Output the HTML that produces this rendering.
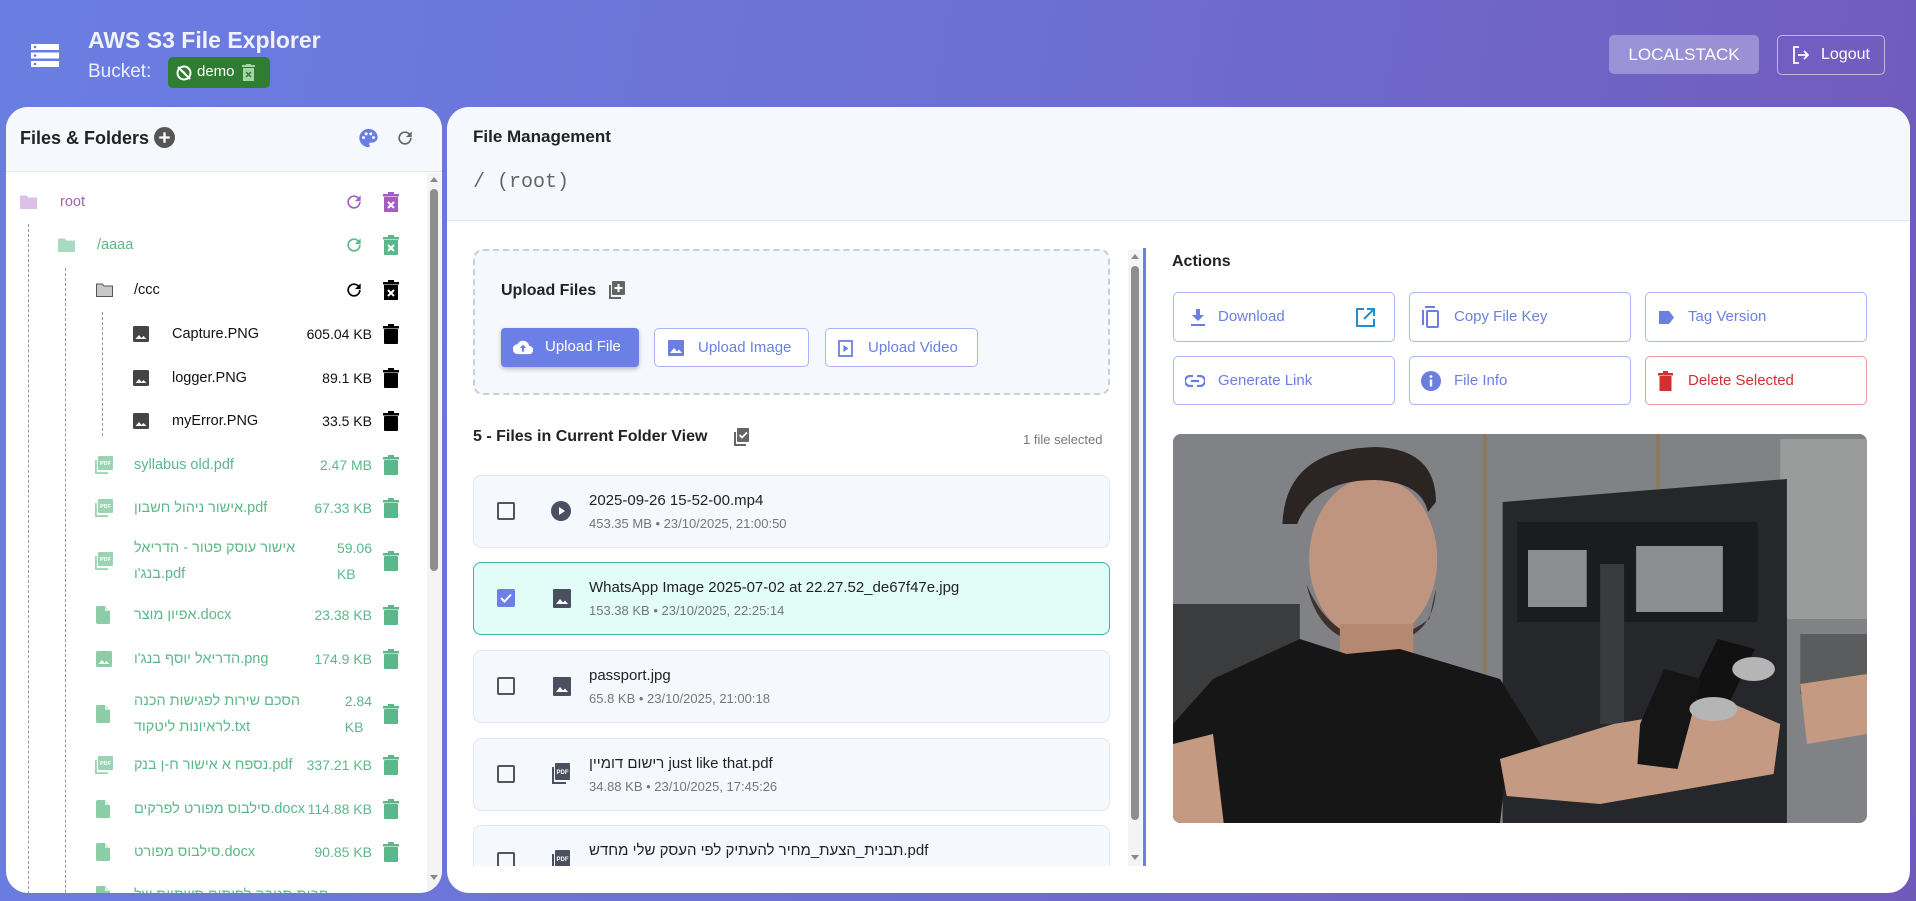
<!DOCTYPE html>
<html><head><meta charset="utf-8">
<style>
*{box-sizing:border-box;margin:0;padding:0}
html,body{width:1916px;height:901px;overflow:hidden}
body{font-family:"Liberation Sans","Noto Sans CJK SC",sans-serif;background:linear-gradient(100deg,#6a7ee2 0%,#6d6fd2 50%,#7159ba 100%);position:relative;color:#222}
.a{position:absolute}
svg{display:block}
.panel{position:absolute;background:#fff;border-radius:22px;overflow:hidden}
.hdr{background:#f5f8fc;border-bottom:1px solid #e2e7ee;position:absolute;left:0;right:0;top:0}
.t{position:absolute;white-space:nowrap;font-size:15px;line-height:18px}
.dash{position:absolute;border-left:1px dashed #999;width:0}
.btn{position:absolute;border:1px solid #a9b5f2;border-radius:5px;background:#fff;color:#6b7fe0;font-size:15px;display:flex;align-items:center}
.card{position:absolute;left:473px;width:637px;height:73px;background:#f5f8fc;border:1px solid #e2e7ef;border-radius:8px}
.cb{position:absolute;left:23px;top:26px;width:18px;height:18px;border:2px solid #555;border-radius:2px}
.cn{position:absolute;left:115px;top:16px;font-size:15px;color:#222;white-space:nowrap}
.cm{position:absolute;left:115px;top:40px;font-size:13px;color:#777;white-space:nowrap}
.ci{position:absolute;left:78px;top:26px}
</style></head><body>

<div class="a" style="left:31px;top:44px">
<svg width="28" height="23" viewBox="0 0 28 23"><g fill="#fff"><rect x="0" y="0" width="28" height="6"/><rect x="0" y="8.5" width="28" height="6"/><rect x="0" y="17" width="28" height="6"/></g><g fill="#6a7ee2"><circle cx="4" cy="3" r="1.3"/><circle cx="4" cy="11.5" r="1.3"/><circle cx="4" cy="20" r="1.3"/></g></svg></div>
<div class="t" style="left:88px;top:26px;font-size:23px;line-height:28px;font-weight:bold;color:#f1f1f8">AWS S3 File Explorer</div>
<div class="t" style="left:88px;top:61px;font-size:19px;line-height:22px;color:#eeeef8">Bucket:</div>
<div class="a" style="left:168px;top:57px;width:102px;height:31px;background:#2e7d32;border-radius:5px">
<svg class="a" style="left:8px;top:8px" width="16" height="16" viewBox="0 0 16 16"><circle cx="8" cy="8" r="6.5" fill="none" stroke="#fff" stroke-width="2"/><path d="M2 2L14 14" stroke="#fff" stroke-width="2"/><path d="M5 6q3 0 4 3" stroke="#fff" stroke-width="1.5" fill="none"/></svg>
<div class="t" style="left:29px;top:6px;color:#fff;font-size:15px">demo</div>
<svg class="a" style="left:74px;top:7px" width="13" height="17" viewBox="0 0 13 17"><rect x="0" y="1" width="13" height="2" fill="#a5d6a7"/><rect x="4" y="0" width="5" height="2" fill="#a5d6a7"/><rect x="1" y="4" width="11" height="13" fill="#a5d6a7"/><path d="M4 8l5 5M9 8l-5 5" stroke="#2e7d32" stroke-width="1.5"/></svg>
</div>
<div class="a" style="left:1609px;top:35px;width:150px;height:39px;background:rgba(255,255,255,.3);border-radius:5px;color:#fff;font-size:17px;display:flex;align-items:center;justify-content:center">LOCALSTACK</div>
<div class="a" style="left:1777px;top:35px;width:108px;height:40px;border:1px solid rgba(255,255,255,.55);border-radius:5px;color:#fff;font-size:16px">
<svg class="a" style="left:14px;top:10px" width="18" height="18" viewBox="0 0 18 18" fill="none" stroke="#fff" stroke-width="1.8"><path d="M7 1H2v16h5"/><path d="M6 9h10M12 5l4 4-4 4"/></svg>
<div class="t" style="left:43px;top:10px;font-size:16px">Logout</div></div>

<div class="panel" style="left:6px;top:107px;width:436px;height:786px">
<div class="hdr" style="height:65px"></div>
<div class="t" style="left:14px;top:20px;font-size:18px;line-height:22px;font-weight:bold;color:#222">Files &amp; Folders</div>
<svg class="a" style="left:148px;top:20px" width="21" height="21" viewBox="0 0 20 20"><circle cx="10" cy="10" r="10" fill="#555"/><path d="M10 5v10M5 10h10" stroke="#fff" stroke-width="2.2"/></svg>
<svg class="a" style="left:351px;top:20px" width="23" height="22" viewBox="0 0 24 24"><path fill="#6a7ee2" d="M12 2C6.5 2 2 6.5 2 12s4.5 10 10 10c.9 0 1.5-.7 1.5-1.5 0-.4-.1-.7-.4-1-.2-.3-.4-.6-.4-1 0-.8.7-1.5 1.5-1.5H16c3.3 0 6-2.7 6-6C22 6 17.5 2 12 2z"/><g fill="#fff"><circle cx="6.5" cy="11.5" r="1.6"/><circle cx="9.5" cy="7.5" r="1.6"/><circle cx="14.5" cy="7.5" r="1.6"/><circle cx="17.5" cy="11.5" r="1.6"/></g></svg>
<svg class="a" style="left:389px;top:21px" width="20" height="20" viewBox="0 0 24 24"><path fill="#666" d="M17.65 6.35A7.96 7.96 0 0012 4a8 8 0 108 8h-2a6 6 0 11-1.76-4.24L13 11h7V4l-2.35 2.35z"/></svg>
<div class="a" style="left:421px;top:66px;width:14px;height:720px;background:#f4f4f4"></div>
<div class="a" style="left:424px;top:70px;width:0;height:0;border-left:4px solid transparent;border-right:4px solid transparent;border-bottom:5px solid #888"></div>
<div class="a" style="left:424px;top:82px;width:8px;height:382px;background:#8e8e8e;border-radius:4px"></div>
<div class="a" style="left:424px;top:768px;width:0;height:0;border-left:4px solid transparent;border-right:4px solid transparent;border-top:5px solid #888"></div>
</div>

<div id="tree"></div>

<div class="panel" style="left:447px;top:107px;width:1463px;height:786px">
<div class="hdr" style="height:114px"></div>
<div class="t" style="left:26px;top:20px;font-size:17px;line-height:20px;font-weight:bold;color:#222">File Management</div>
<div class="t" style="left:26px;top:64px;font-family:'Liberation Mono',monospace;font-size:20px;line-height:24px;color:#666">/ (root)</div>
</div>

<div class="a" style="left:473px;top:249px;width:637px;height:146px;border:2px dashed #c8d0dc;border-radius:10px;background:#f5f8fc"></div>
<div class="t" style="left:501px;top:282px;font-size:16px;font-weight:bold;color:#222">Upload Files</div>
<svg class="a" style="left:609px;top:281px" width="16" height="18" viewBox="0 0 16 18"><rect x="0" y="4" width="2" height="14" fill="#666"/><rect x="0" y="16" width="12" height="2" fill="#666"/><rect x="3" y="0" width="13" height="14" rx="1" fill="#666"/><path d="M9.5 3v8M5.5 7h8" stroke="#fff" stroke-width="2"/></svg>
<div class="a" style="left:501px;top:328px;width:138px;height:39px;background:#6b7fe6;border-radius:4px;box-shadow:0 2px 4px rgba(0,0,0,.25);color:#fff;font-size:15px">
<svg class="a" style="left:12px;top:12px" width="20" height="15" viewBox="0 0 24 16"><path fill="#fff" d="M19.4 6A7.5 7.5 0 005.4 4 6 6 0 006 16h13a5 5 0 00.4-10z"/><path d="M12 4.5l-4 4h2.6V13h2.8V8.5H16z" fill="#6b7fe6"/></svg>
<div class="t" style="left:44px;top:10px">Upload File</div></div>
<div class="btn" style="left:654px;top:328px;width:155px;height:39px">
<svg class="a" style="left:13px;top:11px" width="16" height="16" viewBox="0 0 16 16"><rect width="16" height="16" rx="1" fill="#6b7fe0"/><path d="M2 13l4-5 3 3.5 2-2 3 3.5z" fill="#fff"/></svg>
<div class="t" style="left:43px;top:10px">Upload Image</div></div>
<div class="btn" style="left:825px;top:328px;width:153px;height:39px">
<svg class="a" style="left:12px;top:11px" width="15" height="17" viewBox="0 0 15 17"><rect x="1" y="1" width="13" height="15" fill="none" stroke="#6b7fe0" stroke-width="1.8"/><path d="M5.5 5v7l5-3.5z" fill="#6b7fe0"/></svg>
<div class="t" style="left:42px;top:10px">Upload Video</div></div>

<div class="t" style="left:473px;top:428px;font-size:16px;font-weight:bold;color:#222">5 - Files in Current Folder View</div>
<svg class="a" style="left:734px;top:428px" width="15" height="18" viewBox="0 0 15 18"><rect x="0" y="4" width="2" height="14" fill="#666"/><rect x="0" y="16" width="12" height="2" fill="#666"/><rect x="3" y="0" width="12" height="14" rx="1" fill="#666"/><path d="M5.5 7l2.5 2.5 5-5" stroke="#fff" stroke-width="1.8" fill="none"/></svg>
<div class="t" style="left:1023px;top:431px;font-size:13px;color:#777">1 file selected</div>

<div class="a" style="left:470px;top:470px;width:650px;height:396px;overflow:hidden">
<div style="position:absolute;left:-470px;top:-470px;width:1200px;height:900px">
<div class="card" style="top:475px"><div class="cb"></div>
<svg class="ci" width="20" height="20" viewBox="0 0 20 20" style="left:77px;top:25px"><circle cx="10" cy="10" r="10" fill="#4a5060"/><path d="M8 6v8l6-4z" fill="#fff"/></svg>
<div class="cn">2025-09-26 15-52-00.mp4</div><div class="cm">453.35 MB • 23/10/2025, 21:00:50</div></div>
<div class="card" style="top:562px;background:#e2fdf8;border-color:#3bb5a6"><div class="cb" style="background:#6b7fe6;border-color:#6b7fe6"><svg width="14" height="14" viewBox="0 0 14 14"><path d="M2 7l3.5 3.5L12 3.5" stroke="#fff" stroke-width="2" fill="none"/></svg></div>
<svg class="ci" width="18" height="19" viewBox="0 0 18 19" style="left:79px"><rect width="18" height="19" rx="1" fill="#4a5060"/><path d="M3 15l4-5 3 3.5 2-2 3 3.5z" fill="#fff"/></svg>
<div class="cn">WhatsApp Image 2025-07-02 at 22.27.52_de67f47e.jpg</div><div class="cm">153.38 KB • 23/10/2025, 22:25:14</div></div>
<div class="card" style="top:650px"><div class="cb"></div>
<svg class="ci" width="18" height="19" viewBox="0 0 18 19" style="left:79px"><rect width="18" height="19" rx="1" fill="#4a5060"/><path d="M3 15l4-5 3 3.5 2-2 3 3.5z" fill="#fff"/></svg>
<div class="cn">passport.jpg</div><div class="cm">65.8 KB • 23/10/2025, 21:00:18</div></div>
<div class="card" style="top:738px"><div class="cb"></div>
<svg class="ci" width="18" height="21" viewBox="0 0 18 21" style="left:78px;top:24px"><rect x="0" y="4" width="2" height="17" fill="#4a5060"/><rect x="0" y="19" width="14" height="2" fill="#4a5060"/><rect x="3" y="0" width="15" height="17" rx="1" fill="#4a5060"/><text x="10.5" y="11" font-size="6" font-weight="bold" fill="#fff" text-anchor="middle" font-family="Liberation Sans">PDF</text></svg>
<div class="cn">רישום דומיין just like that.pdf</div><div class="cm">34.88 KB • 23/10/2025, 17:45:26</div></div>
<div class="card" style="top:825px"><div class="cb"></div>
<svg class="ci" width="18" height="21" viewBox="0 0 18 21" style="left:78px;top:24px"><rect x="0" y="4" width="2" height="17" fill="#4a5060"/><rect x="0" y="19" width="14" height="2" fill="#4a5060"/><rect x="3" y="0" width="15" height="17" rx="1" fill="#4a5060"/><text x="10.5" y="11" font-size="6" font-weight="bold" fill="#fff" text-anchor="middle" font-family="Liberation Sans">PDF</text></svg>
<div class="cn">תבנית_הצעת_מחיר להעתיק לפי העסק שלי מחדש.pdf</div></div>
</div></div>

<div class="a" style="left:1128px;top:250px;width:14px;height:616px;background:#f4f4f4"></div>
<div class="a" style="left:1131px;top:254px;width:0;height:0;border-left:4px solid transparent;border-right:4px solid transparent;border-bottom:5px solid #888"></div>
<div class="a" style="left:1131px;top:266px;width:8px;height:554px;background:#8e8e8e;border-radius:4px"></div>
<div class="a" style="left:1131px;top:855px;width:0;height:0;border-left:4px solid transparent;border-right:4px solid transparent;border-top:5px solid #888"></div>
<div class="a" style="left:1143px;top:248px;width:3px;height:618px;background:#6b7fe6"></div>

<div class="t" style="left:1172px;top:253px;font-size:16px;font-weight:bold;color:#222">Actions</div>
<div class="btn" style="left:1173px;top:292px;width:222px;height:50px">
<svg class="a" style="left:17px;top:16px" width="14" height="17" viewBox="0 0 14 17"><path d="M5 0h4v6h4l-6 6-6-6h4z" fill="#6b7fe0"/><rect y="15" width="14" height="2" fill="#6b7fe0"/></svg>
<div class="t" style="left:44px;top:15px">Download</div>
<svg class="a" style="left:182px;top:15px" width="19" height="19" viewBox="0 0 19 19" fill="none" stroke="#1e90d0" stroke-width="2"><path d="M8 1H1v17h17v-7"/><path d="M11 1h7v7M18 1L8 11"/></svg></div>
<div class="btn" style="left:1409px;top:292px;width:222px;height:50px">
<svg class="a" style="left:12px;top:13px" width="18" height="22" viewBox="0 0 18 22" fill="none" stroke="#6b7fe0" stroke-width="2"><path d="M1 4v15"/><rect x="5" y="5" width="11" height="16" rx="1"/><path d="M3 1h10"/></svg>
<div class="t" style="left:44px;top:15px">Copy File Key</div></div>
<div class="btn" style="left:1645px;top:292px;width:222px;height:50px">
<svg class="a" style="left:12px;top:18px" width="16" height="13" viewBox="0 0 16 13"><path d="M1 0h10l5 6.5-5 6.5H1z" fill="#6b7fe0"/></svg>
<div class="t" style="left:42px;top:15px">Tag Version</div></div>
<div class="btn" style="left:1173px;top:356px;width:222px;height:49px">
<svg class="a" style="left:11px;top:18px" width="20" height="12" viewBox="0 0 20 12" fill="none" stroke="#6b7fe0" stroke-width="2.2"><path d="M8 1H5a5 5 0 000 10h3M12 1h3a5 5 0 010 10h-3M6 6h8"/></svg>
<div class="t" style="left:44px;top:15px">Generate Link</div></div>
<div class="btn" style="left:1409px;top:356px;width:222px;height:49px">
<svg class="a" style="left:11px;top:14px" width="20" height="20" viewBox="0 0 20 20"><circle cx="10" cy="10" r="10" fill="#6b7fe0"/><rect x="8.8" y="8.5" width="2.4" height="7" fill="#fff"/><circle cx="10" cy="5.5" r="1.4" fill="#fff"/></svg>
<div class="t" style="left:44px;top:15px">File Info</div></div>
<div class="btn" style="left:1645px;top:356px;width:222px;height:49px;border-color:#f09a9a;color:#d32f2f">
<svg class="a" style="left:12px;top:14px" width="15" height="20" viewBox="0 0 15 20"><rect x="0" y="2" width="15" height="2.5" fill="#d32f2f"/><rect x="5" y="0" width="5" height="2.5" fill="#d32f2f"/><rect x="1.5" y="5" width="12" height="15" fill="#d32f2f"/></svg>
<div class="t" style="left:42px;top:15px">Delete Selected</div></div>

<div class="a" style="left:1173px;top:434px;width:694px;height:389px;border-radius:8px;overflow:hidden;background:#7d7f82">
<svg width="694" height="389" viewBox="0 0 520 389" preserveAspectRatio="none">
<rect x="0" y="0" width="520" height="389" fill="#808285"/>
<rect x="232" y="0" width="3" height="389" fill="#8a7a60"/>
<rect x="362" y="0" width="3" height="60" fill="#8a7a60"/>
<rect x="455" y="5" width="65" height="180" fill="#9a9c9c"/>
<rect x="470" y="200" width="50" height="60" fill="#5a5c5e"/>
<path d="M247 68L460 45V389H247z" fill="#26272a"/>
<rect x="258" y="88" width="180" height="100" fill="#1b1c1e"/>
<rect x="266" y="116" width="44" height="57" fill="#8b8d90"/>
<rect x="347" y="112" width="65" height="66" fill="#8b8d90"/>
<rect x="320" y="130" width="18" height="160" fill="#3a3b3e"/>
<path d="M0 170h95v250H0z" fill="#3a3c3e"/>
<ellipse cx="150" cy="125" rx="48" ry="82" fill="#c09580"/>
<path d="M82 90q2-75 70-77 45 2 45 55l-6 10q-5-30-40-32-45 0-58 44z" fill="#2b2422"/>
<path d="M100 150q10 60 50 60 45 0 47-55l-5 30q-20 20-40 20-35 0-52-55z" fill="#3e302a"/>
<rect x="125" y="190" width="55" height="40" fill="#b58872"/>
<path d="M0 290L30 245 95 205 130 220 170 215 245 245 280 320 250 330 245 389H0z" fill="#161616"/>
<path d="M0 310L30 300 38 389H0z" fill="#c49a82"/>
<path d="M245 325L330 290 420 270 455 290 450 340 320 370 250 362z" fill="#c49a82"/>
<path d="M388 260l20-55 28 10-25 70z" fill="#111"/>
<path d="M350 290l18-55 28 10-18 90-30-5z" fill="#151515"/>
<ellipse cx="435" cy="235" rx="16" ry="12" fill="#b5b5b5"/>
<ellipse cx="405" cy="275" rx="18" ry="12" fill="#b5b5b5"/>
<path d="M470 250l50-10v60l-45 10z" fill="#c49a82"/>
</svg></div>

<script>
const rows=[
[202,0,'folder','root','', '#a35ebf'],
[245,1,'folder','/aaaa','', '#5cb88a'],
[290,2,'folder','/ccc','', '#111'],
[334,3,'img','Capture.PNG','605.04 KB','#111'],
[378,3,'img','logger.PNG','89.1 KB','#111'],
[421,3,'img','myError.PNG','33.5 KB','#111'],
[465,2,'pdf','syllabus old.pdf','2.47 MB','#5cb88a'],
[508,2,'pdf','אישור ניהול חשבון.pdf','67.33 KB','#5cb88a'],
[561,2,'pdf','אישור עוסק פטור - הדריאל<br>בנג\'ו.pdf','59.06<br>KB','#5cb88a',1],
[615,2,'doc','אפיון מוצר.docx','23.38 KB','#5cb88a'],
[659,2,'img','הדריאל יוסף בנג\'ו.png','174.9 KB','#5cb88a'],
[714,2,'doc','הסכם שירות לפגישות הכנה<br>לראיונות ליטקוד.txt','2.84<br>KB','#5cb88a',1],
[765,2,'pdf','נספח א אישור ח-ן בנק.pdf','337.21 KB','#5cb88a'],
[809,2,'doc','סילבוס מפורט לפרקים.docx','114.88 KB','#5cb88a'],
[852,2,'doc','סילבוס מפורט.docx','90.85 KB','#5cb88a'],
[895,2,'doc','חבות תנובה לפיתוח תשתיות של','','#5cb88a']
];
const light={'#a35ebf':'#dcc0ea','#5cb88a':'#a8dcc0','#111':'#c8c8c8'};
let h='<div class="a" style="left:6px;top:172px;width:415px;height:721px;overflow:hidden"><div style="position:absolute;left:-6px;top:-172px;width:500px;height:1000px">';
h+='<div class="dash" style="left:28px;top:224px;height:700px"></div>';
h+='<div class="dash" style="left:65px;top:268px;height:700px"></div>';
h+='<div class="dash" style="left:102px;top:312px;height:124px"></div>';
const ix=[20,58,96,133], tx=[60,97,134,172];
for(const r of rows){
 const [y,l,t,n,s,c,two]=r; const x=ix[l];
 let ic='';
 if(t=='folder'){ic=`<svg class="a" style="left:${x}px;top:${y-7}px" width="17" height="14" viewBox="0 0 17 14"><path d="M0.5 1h6l1.5 2h8.5v10.5H0.5z" fill="${light[c]}" stroke="${c=='#111'?'#555':light[c]}" stroke-width="1"/></svg>`}
 else if(t=='img'){const f=c=='#111'?'#444':'#8ccca6';ic=`<svg class="a" style="left:${x}px;top:${y-8}px" width="16" height="16" viewBox="0 0 16 16"><rect width="16" height="16" rx="1.5" fill="${f}"/><path d="M2.5 13l3.5-4 2.5 3 2-2 3 3z" fill="#fff"/></svg>`}
 else if(t=='pdf'){ic=`<svg class="a" style="left:${x-1}px;top:${y-9}px" width="18" height="18" viewBox="0 0 18 18"><rect x="0" y="4" width="1.8" height="14" fill="#9ad4b2"/><rect x="0" y="16.2" width="13" height="1.8" fill="#9ad4b2"/><rect x="3" y="0" width="15" height="14" rx="1" fill="#9ad4b2"/><text x="10.5" y="9" font-size="5.5" font-weight="bold" fill="#fff" text-anchor="middle" font-family="Liberation Sans">PDF</text></svg>`}
 else {ic=`<svg class="a" style="left:${x}px;top:${y-9}px" width="14" height="18" viewBox="0 0 14 18"><path d="M1.5 0H9l5 5v11.5a1.5 1.5 0 01-1.5 1.5h-11A1.5 1.5 0 010 16.5v-15A1.5 1.5 0 011.5 0z" fill="#8ccca6"/><path d="M9 0v5h5z" fill="#d8f0e2"/></svg>`}
 h+=ic;
 const lh=two?26:18;
 h+=`<div class="t" style="left:${tx[l]}px;top:${y-(two?26:9)}px;color:${c};line-height:${lh}px;font-size:14.5px">${n}</div>`;
 if(s) h+=`<div class="t" style="right:${500-372}px;top:${y-(two?26:9)}px;color:${c};line-height:${lh}px;font-size:14px;text-align:${two?'left':'right'}">${s}</div>`;
 if(t=='folder'){
  const rc=c=='#111'?'#000':c, tc=c=='#111'?'#000':(c=='#5cb88a'?'#5cb88a':'#a35ebf');
  h+=`<svg class="a" style="left:344px;top:${y-10}px" width="20" height="20" viewBox="0 0 24 24"><path fill="${rc}" d="M17.65 6.35A7.96 7.96 0 0012 4a8 8 0 108 8h-2a6 6 0 11-1.76-4.24L13 11h7V4l-2.35 2.35z"/></svg>`;
  h+=`<svg class="a" style="left:383px;top:${y-10}px" width="16" height="20" viewBox="0 0 16 20"><rect x="0" y="2" width="16" height="2.5" fill="${tc}"/><rect x="5" y="0" width="6" height="2.5" fill="${tc}"/><rect x="1" y="5" width="14" height="15" fill="${tc}"/><path d="M5 10l6 6M11 10l-6 6" stroke="#fff" stroke-width="2"/></svg>`;
 } else if(y<890){
  const tc=c=='#111'?'#000':'#5cb88a';
  h+=`<svg class="a" style="left:383px;top:${y-10}px" width="16" height="20" viewBox="0 0 16 20"><rect x="0" y="2" width="16" height="2.5" fill="${tc}"/><rect x="5" y="0" width="6" height="2.5" fill="${tc}"/><rect x="1" y="5" width="14" height="15" rx="1" fill="${tc}"/></svg>`;
 }
}
h+='</div></div>';
document.getElementById('tree').innerHTML=h;
</script>
</body></html>
